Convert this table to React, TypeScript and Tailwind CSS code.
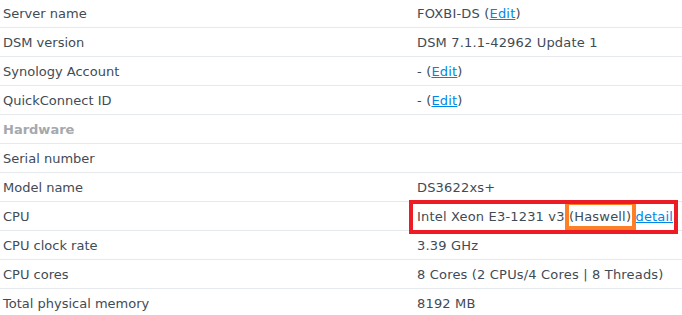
import React from "react";

const Edit = () => (
  <>
    (<a className="text-[#0086e5] underline cursor-pointer">Edit</a>)
  </>
);

type Row = { label: string; value?: React.ReactNode; header?: boolean; cpu?: boolean };

const rows: Row[] = [
  { label: "Server name", value: <>FOXBI-DS <Edit /></> },
  { label: "DSM version", value: "DSM 7.1.1-42962 Update 1" },
  { label: "Synology Account", value: <>- <Edit /></> },
  { label: "QuickConnect ID", value: <>- <Edit /></> },
  { label: "Hardware", header: true },
  { label: "Serial number" },
  { label: "Model name", value: "DS3622xs+" },
  { label: "CPU", cpu: true },
  { label: "CPU clock rate", value: "3.39 GHz" },
  { label: "CPU cores", value: "8 Cores (2 CPUs/4 Cores | 8 Threads)" },
  { label: "Total physical memory", value: "8192 MB" },
];

export default function App() {
  return (
    <div
      className="w-[682px] h-[315px] overflow-hidden bg-white text-[13px] text-[#414b55]"
      style={{ fontFamily: '"DejaVu Sans", Verdana, sans-serif' }}
    >
      <div className="-mt-px flex flex-col">
        {rows.map((r, i) => (
          <div key={i} className="flex h-[29px] border-b border-[#e6e9ee] items-stretch">
            <div
              className={`w-[417px] pl-[3px] pt-px flex items-center whitespace-nowrap ${
                r.header ? "font-bold text-[#a4a9ae]" : ""
              }`}
            >
              {r.label}
            </div>
            <div className="flex-1 pt-px flex items-center whitespace-nowrap tracking-[0.18px]">
              {r.cpu ? (
                <span className="relative self-stretch flex items-center">
                  <span>Intel Xeon E3-1231 v3&nbsp;</span>
                  <span className="relative self-stretch flex items-center">
                    (Haswell)
                    <span className="absolute -left-[4px] -right-[5px] -top-[2px] bottom-0 border-4 border-[#ff7f27]" />
                  </span>
                  <span>&nbsp;</span>
                  <a className="text-[#0086e5] underline cursor-pointer">detail</a>
                  <span className="absolute -left-[8px] -right-[5px] -top-[3px] -bottom-[4px] border-4 border-[#ed1c24]" />
                </span>
              ) : (
                r.value
              )}
            </div>
          </div>
        ))}
      </div>
    </div>
  );
}
